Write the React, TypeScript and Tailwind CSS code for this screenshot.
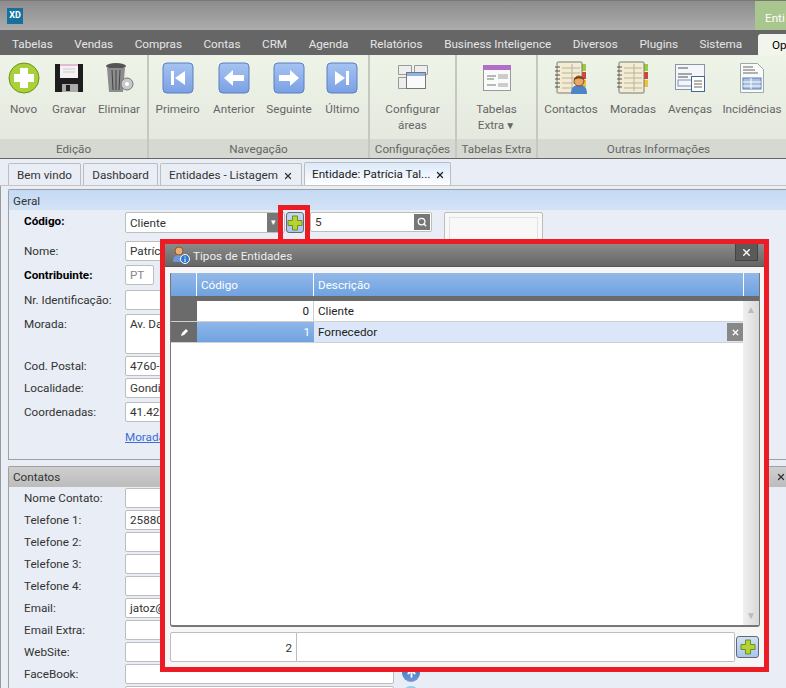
import React from 'react';
import { X, Search, ArrowUp } from 'lucide-react';

const font = "font-['Roboto','Liberation_Sans',sans-serif]";

const menu = ['Tabelas', 'Vendas', 'Compras', 'Contas', 'CRM', 'Agenda', 'Relatórios', 'Business Inteligence', 'Diversos', 'Plugins', 'Sistema'];

const PlusGlyph = ({ size = 16 }: { size?: number }) => (
  <svg width={size} height={size} viewBox="0 0 16 16">
    <path d="M5.500 1h5v4.500H15v5h-4.500V15h-5v-4.500H1v-5h4.500z" fill="#b5d334" stroke="#6f8f1e" />
  </svg>
);

const NavIcon = ({ d }: { d: string }) => (
  <svg width="32" height="32" viewBox="0 0 32 32">
    <defs>
      <linearGradient id="navg" x1="0" y1="0" x2="0" y2="1">
        <stop offset="0" stopColor="#a6c4f2" />
        <stop offset="1" stopColor="#7aa0e4" />
      </linearGradient>
    </defs>
    <rect x="1" y="1" width="30" height="30" rx="4" fill="url(#navg)" stroke="#5b7fc0" />
    <path d={d} fill="#fff" />
  </svg>
);

const RibbonButton = ({ icon, label, className }: { icon: React.ReactNode; label: React.ReactNode; className: string }) => (
  <div className={`flex flex-col items-center ${className}`}>
    <div className="flex h-[34px] items-center justify-center">{icon}</div>
    <div className="mt-[6px] text-center leading-[16px] text-[#666]">{label}</div>
  </div>
);

const Group = ({ title, width, children }: { title: string; width: string; children: React.ReactNode }) => (
  <div className={`flex h-full shrink-0 flex-col border-r-2 border-[#c4c8c0] ${width}`}>
    <div className="flex flex-1 pt-[6px]">{children}</div>
    <div className="flex h-[19px] items-center justify-center whitespace-nowrap bg-[#d6d9d1] pt-[3px] text-[#666]">{title}</div>
  </div>
);

const Notebook = ({ person }: { person?: boolean }) => (
  <svg width="34" height="34" viewBox="0 0 34 34">
    <rect x="27" y="3" width="5" height="7" fill="#9ccb3c" />
    <rect x="27" y="11" width="5" height="7" fill="#d8403c" />
    <rect x="27" y="19" width="5" height="7" fill="#e8c33c" />
    <rect x="3" y="1" width="25" height="31" rx="1" fill="#f3ecd2" stroke="#7a7a70" />
    <path d="M8 7h18M8 12h18M8 17h18M8 22h18M8 27h18M18 3v27" stroke="#b7b39c" />
    <path d="M1 6h5M1 10h5M1 14h5M1 18h5M1 22h5M1 26h5" stroke="#555" />
    {person && (
      <g>
        <path d="M17 33c0-7 3-9 8-9s8 2 8 9z" fill="#4f83c9" />
        <circle cx="25" cy="20" r="5" fill="#e8a868" stroke="#8a4a1e" />
        <path d="M20 19c0-4 9-5 10 0-3-2-7-2-10 0z" fill="#7a3c12" />
      </g>
    )}
  </svg>
);

const Field = ({ label, value, bold, w, h = 'h-[20px]', rowClass, valueClass = 'text-[#333]', children }: { label: string; value?: string; bold?: boolean; w: string; h?: string; rowClass: string; valueClass?: string; children?: React.ReactNode }) => (
  <div className={`flex items-start ${rowClass}`}>
    <div className={`w-[116px] shrink-0 whitespace-nowrap pl-[15px] leading-[20px] text-[#333] ${bold ? 'font-bold text-black' : ''}`}>{label}</div>
    <div className={`${w} ${h} shrink-0 rounded-[2px] border border-[#bdbdbd] bg-white pl-[4px] leading-[19px] ${valueClass}`}>{value}</div>
    {children}
  </div>
);

export default function App() {
  return (
    <div className={`relative h-[688px] w-[786px] overflow-hidden bg-[#e9edf5] text-[11.7px] ${font}`}>
      {/* title bar */}
      <div className="flex h-[30px] items-center justify-between border-t border-[#777] bg-gradient-to-b from-[#8c8c8c] to-[#adadad] pl-[7px]">
        <div className="flex h-[16px] w-[16px] items-center justify-center bg-[#16719f] text-[9px] font-bold leading-none text-white">XD</div>
        <div className="h-[29px] w-[31px] overflow-hidden bg-[#a9c68f] pl-[10px] pt-[9px] text-white">Enti</div>
      </div>

      {/* menu */}
      <div className="flex h-[25px] items-center justify-between overflow-hidden bg-[#666] pl-[12px] text-[#e6e6e6]">
        <div className="flex gap-[21.600px] whitespace-nowrap pt-[4px]">
          {menu.map(m => (
            <span key={m}>{m}</span>
          ))}
        </div>
        <div className="mt-[4px] h-[21px] w-[28px] shrink-0 rounded-tl-[3px] bg-[#f1f5ec] pl-[14px] pt-[3px] text-black">Op</div>
      </div>

      {/* ribbon */}
      <div className="flex h-[104px] overflow-hidden border-b border-[#666] bg-gradient-to-b from-[#eff4e9] to-[#e2e6dc]">
        <Group title="Edição" width="w-[149px]">
          <RibbonButton className="w-[47px]" label="Novo" icon={
            <svg width="32" height="32" viewBox="0 0 32 32">
              <circle cx="16" cy="16" r="15" fill="#a9d13a" stroke="#6f8f1e" />
              <path d="M12 6h8v6h6v8h-6v6h-8v-6H6v-8h6z" fill="#fff" />
            </svg>
          } />
          <RibbonButton className="w-[44px]" label="Gravar" icon={
            <svg width="30" height="32" viewBox="0 0 30 32">
              <path d="M1 2h28v28H1z" fill="#1d1d1d" />
              <rect x="6" y="2" width="18" height="14" fill="#f3f1f4" />
              <rect x="6" y="2" width="18" height="2" fill="#e6b8d8" />
              <path d="M9 7h12M9 10h12" stroke="#ccc" />
              <rect x="8" y="22" width="16" height="8" fill="#aaa" />
              <rect x="12" y="23" width="4" height="6" fill="#222" />
            </svg>
          } />
          <RibbonButton className="w-[56px]" label="Eliminar" icon={
            <svg width="30" height="32" viewBox="0 0 30 32">
              <ellipse cx="12" cy="4" rx="10" ry="3" fill="#555" />
              <path d="M3 6h18l-2 24H5z" fill="#8d8d8d" />
              <path d="M8 8l1 20M12 8v20M16 8l-1 20" stroke="#444" />
              <circle cx="23" cy="22" r="6" fill="#c9c9c9" stroke="#777" />
              <circle cx="23" cy="22" r="2" fill="#fff" />
            </svg>
          } />
        </Group>
        <Group title="Navegação" width="w-[221px]">
          <RibbonButton className="w-[58px]" label="Primeiro" icon={<NavIcon d="M9 9h3v14H9zM13 16l10-7v14z" />} />
          <RibbonButton className="w-[56px]" label="Anterior" icon={<NavIcon d="M6 16l9-8v5h11v6H15v5z" />} />
          <RibbonButton className="w-[56px]" label="Seguinte" icon={<NavIcon d="M26 16l-9-8v5H6v6h11v5z" />} />
          <RibbonButton className="w-[52px]" label="Último" icon={<NavIcon d="M23 9h-3v14h3zM19 16L9 9v14z" />} />
        </Group>
        <Group title="Configurações" width="w-[87px]">
          <RibbonButton className="w-[87px]" label={<>Configurar<br />áreas</>} icon={
            <svg width="32" height="30" viewBox="0 0 32 30">
              <path d="M1.500 2.500h13v9h-13zM17.500 2.500h13v9h-13zM1.500 14.500h13v11h-13z" fill="#eee" stroke="#999" />
              <rect x="9.500" y="9.500" width="19" height="16" fill="#fafafa" stroke="#777" />
              <rect x="10" y="10" width="18" height="3" fill="#8fb2e8" />
            </svg>
          } />
        </Group>
        <Group title="Tabelas Extra" width="w-[81px]">
          <RibbonButton className="w-[79px]" label={<>Tabelas<br />Extra<span className="ml-[1px] text-[10px]">▼</span></>} icon={
            <svg width="30" height="28" viewBox="0 0 30 28">
              <rect x="1.500" y="1.500" width="27" height="25" fill="#fafafa" stroke="#999" />
              <rect x="1" y="1" width="28" height="5" fill="#b070c8" />
              <path d="M5 12h9M5 15h7M5 21h9" stroke="#777" />
              <rect x="16" y="10" width="10" height="5" fill="#ccc" />
              <rect x="16" y="19" width="10" height="4" fill="#ccc" />
            </svg>
          } />
        </Group>
        <div className="flex h-full flex-1 flex-col">
          <div className="flex flex-1 pt-[6px]">
            <RibbonButton className="w-[66px]" label="Contactos" icon={<Notebook person />} />
            <RibbonButton className="w-[58px]" label="Moradas" icon={<Notebook />} />
            <RibbonButton className="w-[56px]" label="Avenças" icon={
              <svg width="32" height="30" viewBox="0 0 32 30">
                <rect x="1.500" y="1.500" width="29" height="25" fill="#f4f6fa" stroke="#8a93a8" />
                <path d="M4 5h10M4 11h14M4 14h10" stroke="#555" />
                <rect x="4" y="17" width="14" height="6" fill="none" stroke="#7f8fb0" />
                <rect x="17.500" y="13.500" width="13" height="15" fill="#fff" stroke="#41669c" />
                <path d="M20 18h8M20 21h8M20 24h8" stroke="#666" />
              </svg>
            } />
            <RibbonButton className="w-[68px]" label="Incidências" icon={
              <svg width="26" height="32" viewBox="0 0 26 32">
                <path d="M1.500 1.500h17l6 6v23h-23z" fill="#fafafa" stroke="#9aa" />
                <path d="M4 5h10M4 8h12M4 11h15" stroke="#666" />
                <rect x="4" y="16" width="18" height="11" fill="#a9bfe0" stroke="#5a7fb5" />
                <path d="M4 20h18M4 24h18M12 16v11" stroke="#fff" />
              </svg>
            } />
          </div>
          <div className="flex h-[19px] items-center justify-center bg-[#d6d9d1] pr-[7px] pt-[3px] text-[#666]">Outras Informações</div>
        </div>
      </div>

      {/* document tabs */}
      <div className="flex h-[27px] items-end gap-[2px] whitespace-nowrap border-b border-[#c4c4c4] pl-[8px] text-[#333]">
        <div className="flex h-[22px] w-[73px] items-center justify-center rounded-t-[2px] border border-b-0 border-[#bdbdbd] pt-[2px]">Bem vindo</div>
        <div className="flex h-[22px] w-[75px] items-center justify-center rounded-t-[2px] border border-b-0 border-[#bdbdbd] pt-[2px]">Dashboard</div>
        <div className="flex h-[22px] w-[142px] items-center justify-between rounded-t-[2px] border border-b-0 border-[#bdbdbd] px-[8px] pt-[2px]">
          Entidades - Listagem <X size={10} strokeWidth={3} />
        </div>
        <div className="flex h-[23px] w-[147px] items-center justify-between rounded-t-[2px] border border-b-0 border-[#bdbdbd] bg-gradient-to-b from-[#dbe9f9] to-white pl-[7px] pr-[5px] pt-[2px] text-[#222]">
          Entidade: Patrícia Tal... <X size={10} strokeWidth={3} />
        </div>
      </div>

      {/* page body */}
      <div className="border-l border-[#9a9a9a] pl-[7px] pt-[3px]">
        <div className="h-[271px] w-[778px] rounded-tl-[2px] border border-r-0 border-[#a0a0a0]">
          <div className="h-[20px] bg-gradient-to-b from-[#c4daf4] to-[#d3e3f6] pl-[4px] leading-[22px] text-[#333]">Geral</div>
          <div className="flex pt-[2px]">
            <div className="w-[435px] shrink-0">
              <div className="mb-[8px] flex items-start">
                <div className="w-[116px] pl-[15px] font-bold leading-[19px] text-black">Código:</div>
                <div className="flex h-[21px] w-[160px] items-center justify-between rounded-[2px] border border-[#bdbdbd] bg-white pl-[4px] pr-[5px] text-[#333]">
                  <span className="pt-[2px]">Cliente</span>
                  <span className="flex h-[19px] w-[12px] items-center justify-center bg-[#777] text-[9px] text-white">▾</span>
                </div>
                <div className="ml-[1px] flex h-[21px] w-[18px] items-center justify-center rounded-[3px] border border-[#667] bg-gradient-to-b from-[#c4d8f2] to-[#a9c6ee]"><PlusGlyph /></div>
                <div className="ml-[6px] flex h-[20px] w-[122px] items-center justify-between rounded-[2px] border border-[#bdbdbd] bg-white pl-[4px] pr-[1px] text-[#333]">
                  <span className="pt-[2px]">5</span>
                  <span className="flex h-[16px] w-[16px] items-center justify-center bg-[#777] text-white"><Search size={10} strokeWidth={3} /></span>
                </div>
              </div>
              <Field rowClass="mb-[4px]" label="Nome:" value="Patrícia" w="w-[160px]" />
              <Field rowClass="mb-[5px]" label="Contribuinte:" value="PT" valueClass="text-[#888]" bold w="w-[29px]" />
              <Field rowClass="mb-[4px]" label="Nr. Identificação:" w="w-[160px]" />
              <Field rowClass="mb-[2px]" label="Morada:" value="Av. Da" w="w-[160px]" h="h-[40px]" />
              <Field rowClass="mb-[2px]" label="Cod. Postal:" value="4760-" w="w-[160px]" />
              <Field rowClass="mb-[4px]" label="Localidade:" value="Gondi" w="w-[160px]" />
              <Field rowClass="" label="Coordenadas:" value="41.422" w="w-[160px]" />
              <div className="pl-[116px] pt-[7px] leading-[16px] text-[#3a6fd8] underline">Morada</div>
            </div>
            <div className="h-[200px] w-[99px] rounded-[2px] border border-[#bdbdbd] bg-[#f8f8f8] p-[4px]">
              <div className="h-full border border-[#e2e2e2]" />
            </div>
          </div>
        </div>
        <div className="mt-[6px] w-[778px] rounded-tl-[2px] border border-r-0 border-[#a0a0a0]">
          <div className="flex h-[20px] items-center justify-between bg-gradient-to-b from-[#cfcfcf] to-[#bcbcbc] pl-[4px] text-[#333]">
            <span className="pt-[2px]">Contatos</span>
            <span className="flex items-center gap-[8px]">l<X size={10} strokeWidth={3} /></span>
          </div>
          <div className="pt-[1px]">
            <Field rowClass="mb-[2px]" label="Nome Contato:" w="w-[269px]" />
            <Field rowClass="mb-[2px]" label="Telefone 1:" value="25880" w="w-[269px]" />
            <Field rowClass="mb-[2px]" label="Telefone 2:" w="w-[269px]" />
            <Field rowClass="mb-[2px]" label="Telefone 3:" w="w-[269px]" />
            <Field rowClass="mb-[2px]" label="Telefone 4:" w="w-[269px]" />
            <Field rowClass="mb-[2px]" label="Email:" value="jatoz@" w="w-[269px]" />
            <Field rowClass="mb-[2px]" label="Email Extra:" w="w-[269px]" />
            <Field rowClass="mb-[2px]" label="WebSite:" w="w-[269px]" />
            <Field rowClass="mb-[2px]" label="FaceBook:" w="w-[269px]">
              <div className="ml-[8px] flex h-[18px] w-[18px] items-center justify-center rounded-full bg-gradient-to-b from-[#3f6db0] to-[#6f9ad8] text-white"><ArrowUp size={11} strokeWidth={4} /></div>
            </Field>
            <Field rowClass="" label="" w="w-[269px]">
              <div className="ml-[8px] h-[18px] w-[18px] rounded-full bg-[#8fd0e8]" />
            </Field>
          </div>
        </div>
      </div>

      {/* red annotation round the plus button */}
      <div className="absolute left-[278px] top-[205px] h-[36px] w-[32px] border-[5px] border-b-0 border-[#ed1c24]" />

      {/* dialog, with the red annotation frame */}
      <div className="absolute left-[160px] top-[239px] flex h-[433px] w-[609px] flex-col border-[5px] border-[#ed1c24] bg-[#f6f6f6]">
        <div className="flex h-[23px] shrink-0 items-start justify-between border-b border-[#555] bg-gradient-to-b from-[#8a8a8a] to-[#666] pl-[7px] pr-[6px] text-[#eee]">
          <div className="flex h-[22px] items-center gap-[3px]">
            <svg width="18" height="18" viewBox="0 0 18 18">
              <path d="M1 16c0-5 2-7 6-7s6 2 6 7z" fill="#6d97d8" />
              <circle cx="7" cy="5" r="4" fill="#e8b070" stroke="#8a5a2a" />
              <circle cx="13" cy="13" r="4.500" fill="#2f78d0" stroke="#fff" />
              <path d="M13 10.500v1M13 12.500v3.500" stroke="#fff" />
            </svg>
            <span className="pt-[3px]">Tipos de Entidades</span>
          </div>
          <div className="flex h-[17px] w-[23px] items-center justify-center border border-t-0 border-[#444] bg-[#5a5a5a] text-white"><X size={11} strokeWidth={3} /></div>
        </div>
        <div className="ml-[5px] mr-[4px] mt-[6px] flex h-[354px] flex-col overflow-hidden rounded-b-[3px] border-b-2 border-l border-r border-[#777] bg-white">
          <div className="flex h-[23px] shrink-0 bg-gradient-to-b from-[#93b8e8] to-[#6ea2e0] leading-[25px] text-white">
            <div className="w-[26px] border-r border-white" />
            <div className="w-[117px] border-r border-white pl-[4px]">Código</div>
            <div className="w-[430px] border-r border-white pl-[4px]">Descrição</div>
            <div className="flex-1" />
          </div>
          <div className="h-[5px] shrink-0 bg-[#6b6b6b]" />
          <div className="flex min-h-0 flex-1">
            <div className="flex min-w-0 flex-1 flex-col">
              <div className="flex h-[21px] border-b border-[#d0d0d0] leading-[21px] text-[#222]">
                <div className="w-[26px] bg-[#6b6b6b]" />
                <div className="w-[117px] border-r border-[#d0d0d0] pr-[4px] text-right">0</div>
                <div className="flex-1 pl-[4px]">Cliente</div>
              </div>
              <div className="flex h-[21px] border-b border-[#d0d0d0] leading-[21px] text-[#222]">
                <div className="flex w-[26px] items-center justify-center bg-[#6b6b6b]">
                  <svg width="9" height="9" viewBox="0 0 9 9"><path d="M1 8l1-3 4-4 2 2-4 4z" fill="#fff" /></svg>
                </div>
                <div className="w-[117px] bg-gradient-to-b from-[#8fb6e8] to-[#6fa3e0] pr-[4px] text-right text-white">1</div>
                <div className="flex flex-1 items-center justify-between bg-[#dbe7f8] pl-[4px]">
                  Fornecedor
                  <span className="flex h-[18px] w-[16px] items-center justify-center bg-[#888] text-white"><X size={9} strokeWidth={3.500} /></span>
                </div>
              </div>
            </div>
            <div className="flex w-[16px] flex-col items-center justify-between bg-gradient-to-r from-[#f0f0f0] to-[#d9d9d9] py-[4px] text-[10px] leading-none text-[#bbb]">
              <span>▲</span>
              <span>▼</span>
            </div>
          </div>
        </div>
        <div className="ml-[5px] mt-[5px] flex h-[30px] shrink-0 items-stretch">
          <div className="w-[127px] rounded-l-[2px] border border-[#bdbdbd] bg-white pr-[4px] text-right leading-[30px] text-[#333]">2</div>
          <div className="w-[438px] rounded-r-[2px] border border-l-0 border-[#bdbdbd] bg-white" />
          <div className="ml-[1px] flex h-[22px] w-[23px] items-center justify-center self-center rounded-[3px] border border-[#667] bg-gradient-to-b from-[#cfe0f6] to-[#a9c6ee]"><PlusGlyph /></div>
        </div>
      </div>
    </div>
  );
}
